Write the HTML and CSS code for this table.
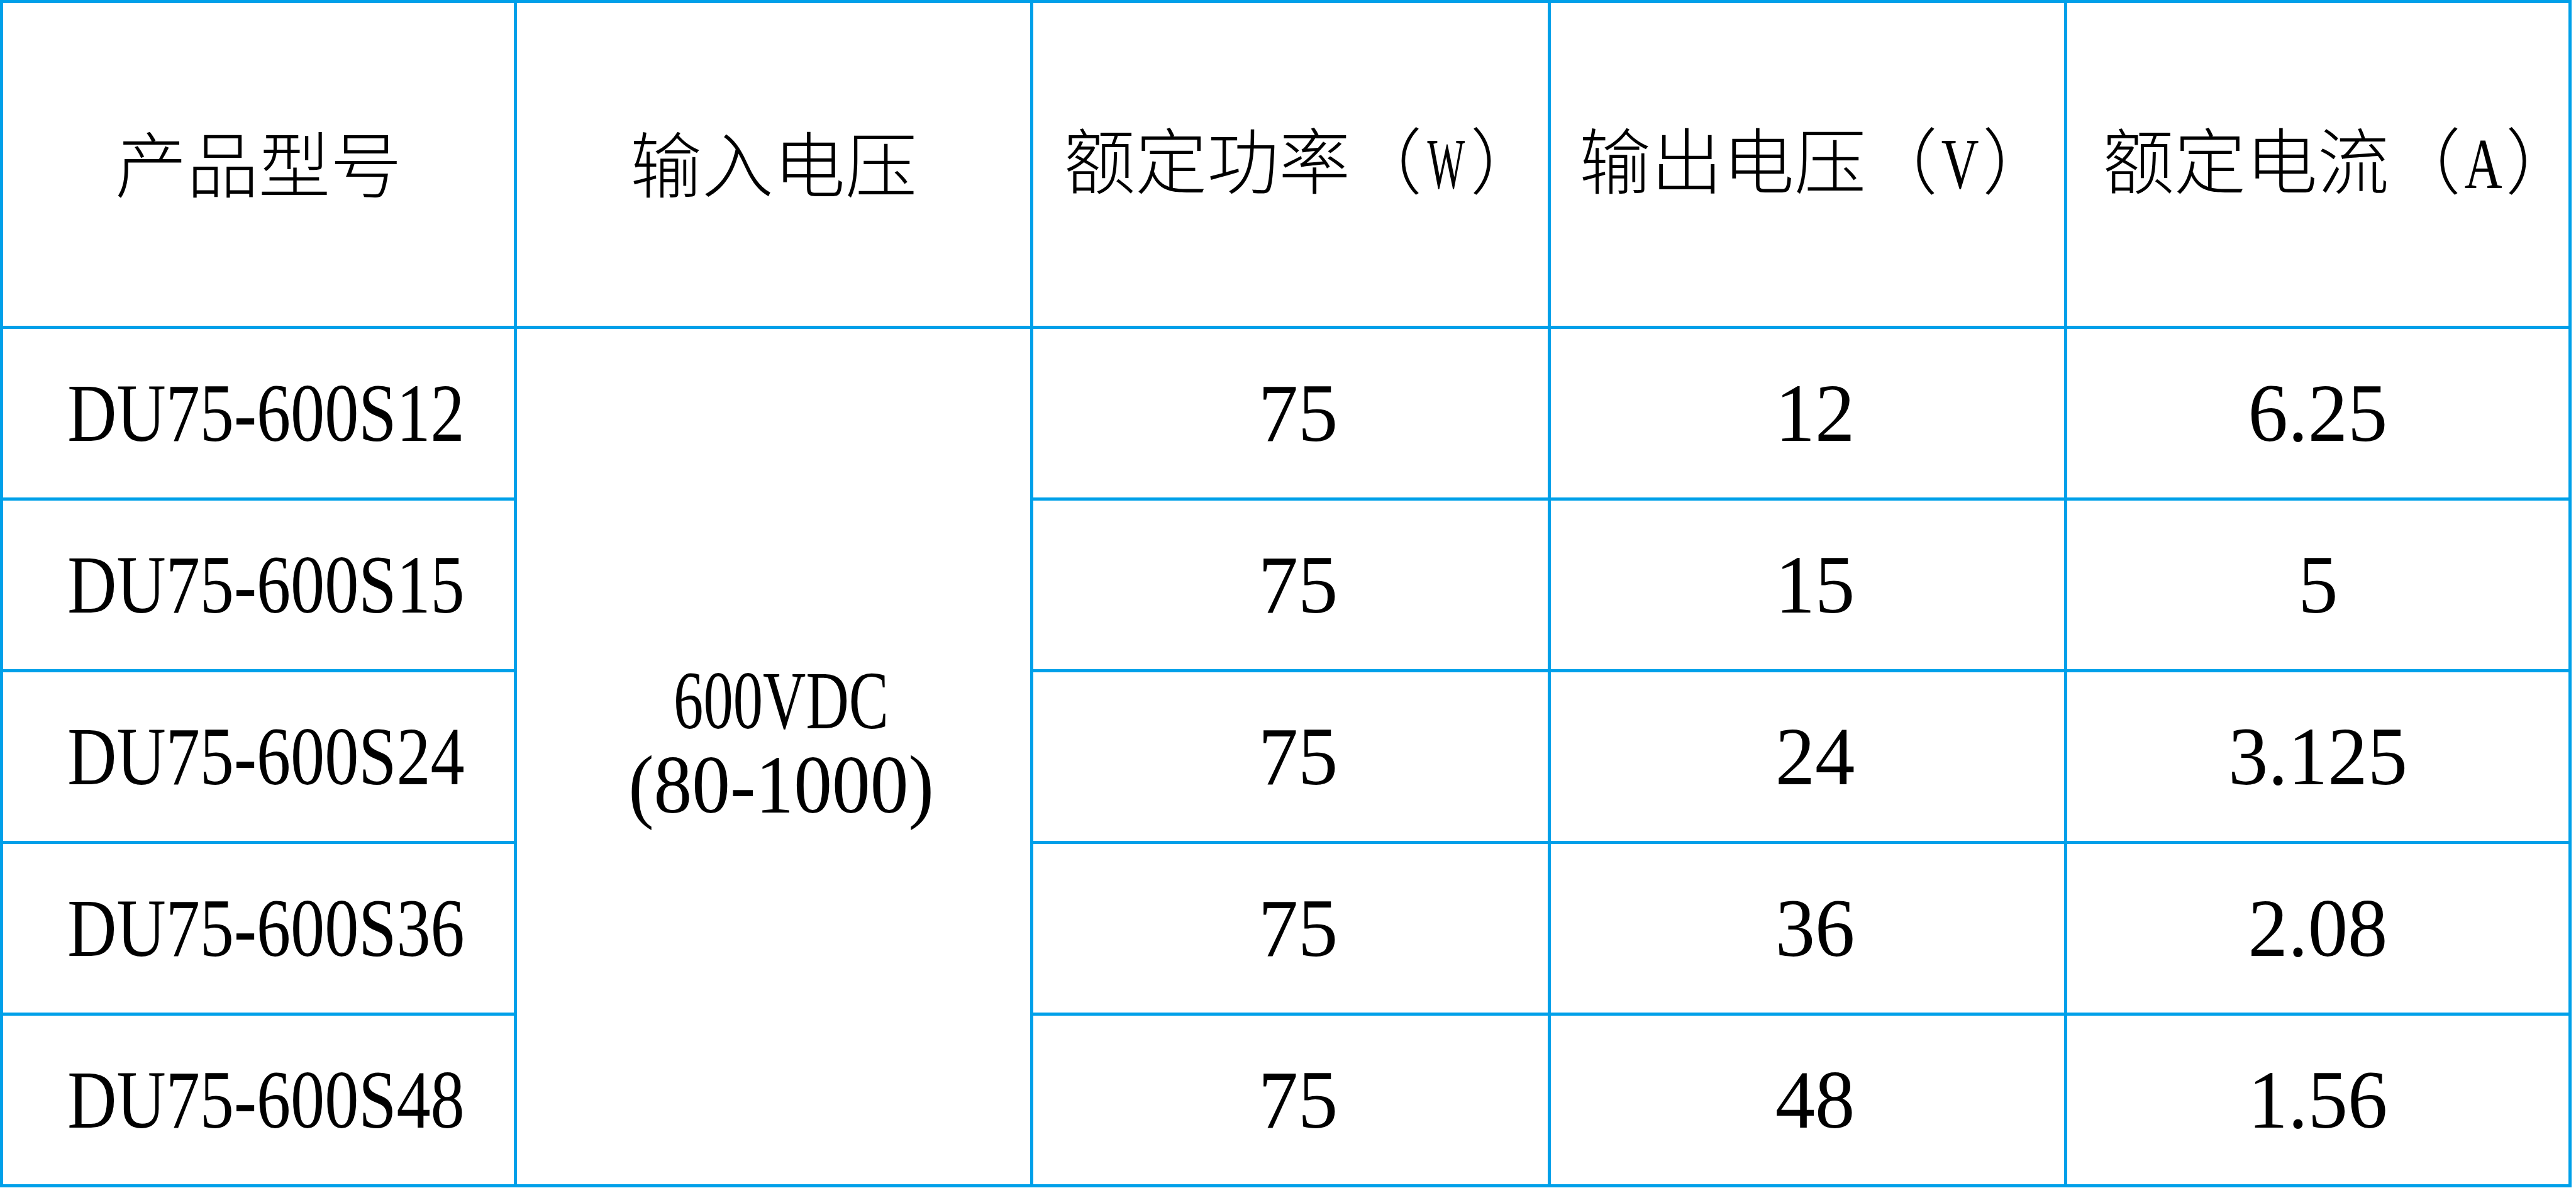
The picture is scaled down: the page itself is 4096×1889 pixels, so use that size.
FILE: index.html
```html
<!DOCTYPE html>
<html lang="zh-CN">
<head>
<meta charset="utf-8">
<title>DU75-600S 系列</title>
<link rel="stylesheet" href="styles.css">
</head>
<body>
<table class="spec">
  <colgroup>
    <col class="col-model">
    <col class="col-input">
    <col class="col-power">
    <col class="col-vout">
    <col class="col-iout">
  </colgroup>
  <thead>
    <tr>
      <th>产品型号</th>
      <th>输入电压</th>
      <th class="head-power">额定功率（<span class="lat unit unit-w">W</span>）</th>
      <th class="head-vout">输出电压（<span class="lat unit unit-v">V</span>）</th>
      <th class="head-iout">额定电流（<span class="lat unit unit-a">A</span>）</th>
    </tr>
  </thead>
  <tbody>
    <tr>
      <td><span class="lat model">DU75-600S12</span></td>
      <td class="input" rowspan="5"><span class="lat vdc">600VDC</span><span class="lat range">(80-1000)</span></td>
      <td><span class="lat num">75</span></td>
      <td><span class="lat num">12</span></td>
      <td><span class="lat num">6.25</span></td>
    </tr>
    <tr>
      <td><span class="lat model">DU75-600S15</span></td>
      <td><span class="lat num">75</span></td>
      <td><span class="lat num">15</span></td>
      <td><span class="lat num">5</span></td>
    </tr>
    <tr>
      <td><span class="lat model">DU75-600S24</span></td>
      <td><span class="lat num">75</span></td>
      <td><span class="lat num">24</span></td>
      <td><span class="lat num">3.125</span></td>
    </tr>
    <tr>
      <td><span class="lat model">DU75-600S36</span></td>
      <td><span class="lat num">75</span></td>
      <td><span class="lat num">36</span></td>
      <td><span class="lat num">2.08</span></td>
    </tr>
    <tr>
      <td><span class="lat model">DU75-600S48</span></td>
      <td><span class="lat num">75</span></td>
      <td><span class="lat num">48</span></td>
      <td><span class="lat num">1.56</span></td>
    </tr>
  </tbody>
</table>
</body>
</html>
```
FILE: styles.css
```css
html, body {
  margin: 0;
  padding: 0;
  background: #ffffff;
}

.spec {
  border-collapse: collapse;
  table-layout: fixed;
  width: 4089px;
  color: #000000;
}

.col-model { width: 817px; }
.col-input { width: 821px; }
.col-power { width: 823px; }
.col-vout  { width: 821px; }
.col-iout  { width: 802px; }

.spec th,
.spec td {
  border: 5px solid #00a0e9;
  padding: 0;
  text-align: center;
  vertical-align: middle;
}

.spec th {
  height: 501px;
  padding-bottom: 12px;
  font-family: "Noto Sans CJK SC", sans-serif;
  font-weight: 300;
  font-size: 114px;
  line-height: 1;
  white-space: nowrap;
}

.spec th.head-power { padding-left: 39px; }
.spec th.head-vout  { padding-left: 29px; }
.spec th.head-iout  { padding-left: 56px; }

.spec td {
  height: 268px;
  font-family: "Liberation Serif", serif;
  font-weight: 400;
  font-size: 132px;
  line-height: 1;
}

.spec td:not(:last-child) {
  padding-left: 24px;
}

.lat {
  display: inline-block;
  font-family: "Liberation Serif", serif;
}

.num {
  transform: scaleX(0.96);
}

.range {
  transform: scaleX(0.92);
}

.model {
  transform: scaleX(0.82);
}

.vdc {
  transform: scaleX(0.717);
}

.spec td.input {
  padding-bottom: 44px;
}

.input .lat {
  display: block;
  line-height: 134px;
}

.unit {
  font-size: 115px;
}

.unit-w {
  transform: scaleX(0.55);
  margin: 0 -16px;
}

.unit-v,
.unit-a {
  transform: scaleX(0.72);
  margin: 0 -6px;
}
```
